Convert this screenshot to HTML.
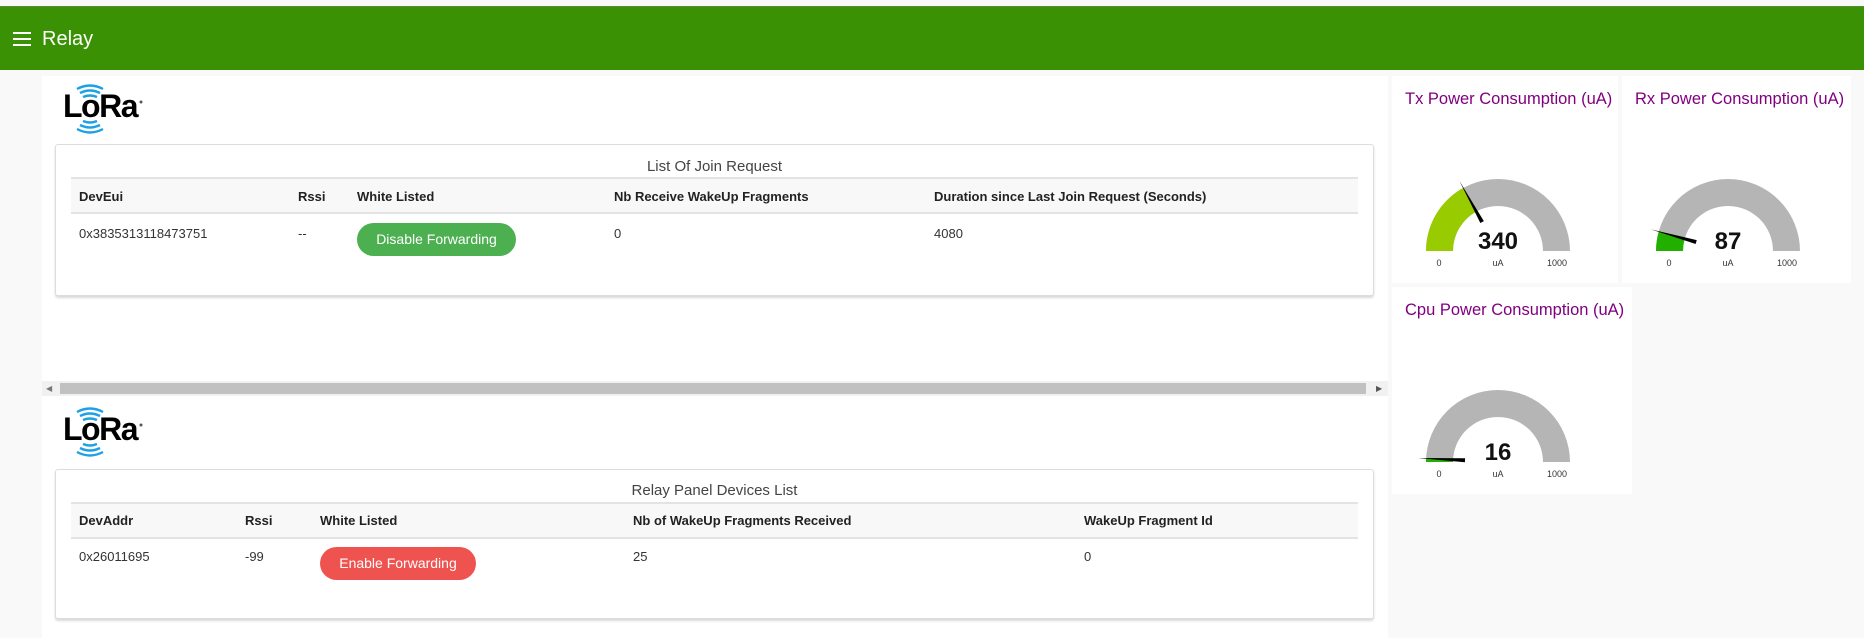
<!DOCTYPE html>
<html><head><meta charset="utf-8"><style>
*{margin:0;padding:0;box-sizing:border-box}
body{width:1864px;height:638px;background:#f9f9f9;font-family:"Liberation Sans",sans-serif;position:relative;overflow:hidden;color:#333}
.abs{position:absolute}
.hdr{left:0;top:6px;width:1864px;height:64px;background:#3a9103;border-top:1px solid #5a8a3a}
.ham{left:13px;top:32px;width:18px;height:2px;background:#fff;box-shadow:0 6px 0 #fff,0 12px 0 #fff}
.title{left:42px;top:28px;color:#fff;font-size:20px}
.panel{left:42px;top:76px;width:1346px;height:562px;background:#fff}
.card{background:#fff;border:1px solid #ddd;border-radius:3px;box-shadow:0 2px 2px rgba(0,0,0,.15)}
.ct{font-size:15px;color:#444;text-align:center;width:100%}
.th{background:#f8f8f8;border-top:2px solid #e3e3e3;border-bottom:2px solid #e3e3e3}
.b{font-weight:bold;font-size:13px;color:#222}
.t{font-size:13px;color:#333}
.btn{color:#fff;font-size:14px;text-align:center;border-radius:17px;line-height:33px;height:33px}
.sb{left:42px;top:381px;width:1346px;height:15px;background:#f1f1f1}
.g{background:#fff}
.gt{font-size:16.5px;color:#800080;white-space:nowrap}
</style></head><body>
<div class="abs hdr"></div>
<div class="abs ham"></div>
<div class="abs title">Relay</div>
<div class="abs panel"></div>

<svg class="abs" style="left:62px;top:84px" width="84" height="52" viewBox="0 0 84 52">
<text x="1" y="33" font-family="Liberation Sans" font-weight="bold" font-size="32" fill="#000" letter-spacing="-1.5">LoRa</text>
<g fill="none" stroke="#1ea0e6" stroke-width="2.4">
<path d="M15,5 Q28,-2 41,5"/><path d="M18,9 Q28,4 38,9"/><path d="M21,13 Q28,10 35,13"/>
<path d="M21,37 Q28,40 35,37"/><path d="M18,41 Q28,46 38,41"/><path d="M15,45 Q28,52 41,45"/>
</g><circle cx="79" cy="18" r="1.5" fill="#555"/></svg>

<div class="abs card" style="left:55px;top:144px;width:1319px;height:152px"></div>
<div class="abs ct" style="left:55px;top:158px;width:1319px">List Of Join Request</div>
<div class="abs th" style="left:71px;top:177px;width:1287px;height:37px"></div>
<div class="abs b" style="left:79px;top:189px">DevEui</div>
<div class="abs b" style="left:298px;top:189px">Rssi</div>
<div class="abs b" style="left:357px;top:189px">White Listed</div>
<div class="abs b" style="left:614px;top:189px">Nb Receive WakeUp Fragments</div>
<div class="abs b" style="left:934px;top:189px">Duration since Last Join Request (Seconds)</div>
<div class="abs t" style="left:79px;top:226px">0x3835313118473751</div>
<div class="abs t" style="left:298px;top:226px">--</div>
<div class="abs btn" style="left:357px;top:223px;width:159px;background:#4caf50">Disable Forwarding</div>
<div class="abs t" style="left:614px;top:226px">0</div>
<div class="abs t" style="left:934px;top:226px">4080</div>

<div class="abs sb"></div>
<div class="abs" style="left:60px;top:383px;width:1306px;height:11px;background:#c1c1c1"></div>
<div class="abs" style="left:46px;top:384px;font-size:8px;color:#777">&#9664;</div>
<div class="abs" style="left:1376px;top:384px;font-size:8px;color:#555">&#9654;</div>

<svg class="abs" style="left:62px;top:407px" width="84" height="52" viewBox="0 0 84 52">
<text x="1" y="33" font-family="Liberation Sans" font-weight="bold" font-size="32" fill="#000" letter-spacing="-1.5">LoRa</text>
<g fill="none" stroke="#1ea0e6" stroke-width="2.4">
<path d="M15,5 Q28,-2 41,5"/><path d="M18,9 Q28,4 38,9"/><path d="M21,13 Q28,10 35,13"/>
<path d="M21,37 Q28,40 35,37"/><path d="M18,41 Q28,46 38,41"/><path d="M15,45 Q28,52 41,45"/>
</g><circle cx="79" cy="18" r="1.5" fill="#555"/></svg>

<div class="abs card" style="left:55px;top:469px;width:1319px;height:150px"></div>
<div class="abs ct" style="left:55px;top:482px;width:1319px">Relay Panel Devices List</div>
<div class="abs th" style="left:71px;top:502px;width:1287px;height:37px"></div>
<div class="abs b" style="left:79px;top:513px">DevAddr</div>
<div class="abs b" style="left:245px;top:513px">Rssi</div>
<div class="abs b" style="left:320px;top:513px">White Listed</div>
<div class="abs b" style="left:633px;top:513px">Nb of WakeUp Fragments Received</div>
<div class="abs b" style="left:1084px;top:513px">WakeUp Fragment Id</div>
<div class="abs t" style="left:79px;top:549px">0x26011695</div>
<div class="abs t" style="left:245px;top:549px">-99</div>
<div class="abs btn" style="left:320px;top:547px;width:156px;background:#ef5350">Enable Forwarding</div>
<div class="abs t" style="left:633px;top:549px">25</div>
<div class="abs t" style="left:1084px;top:549px">0</div>

<div class="abs g" style="left:1392px;top:76px;width:226px;height:207px">
<div class="abs gt" style="left:13px;top:14px">Tx Power Consumption (uA)</div>
<svg class="abs" style="left:6px;top:75px" width="200" height="130">
<path d="M28,100 A72,72 0 0 1 172,100 L145,100 A45,45 0 0 0 55,100 Z" fill="#b5b5b5"/>
<path d="M28,100 A72,72 0 0 1 65.3,36.9 L78.3,60.6 A45,45 0 0 0 55,100 Z" fill="#99cc00"/>
<polygon points="61.4,29.9 85.85,70.14 82.35,72.06" fill="#000"/>
<text x="100" y="98" text-anchor="middle" font-family="Liberation Sans" font-weight="bold" font-size="24" fill="#111">340</text>
<g font-family="Liberation Sans" font-size="9" fill="#333" text-anchor="middle"><text x="41" y="115">0</text><text x="100" y="115">uA</text><text x="159" y="115">1000</text></g>
</svg></div>

<div class="abs g" style="left:1622px;top:76px;width:229px;height:207px">
<div class="abs gt" style="left:13px;top:14px">Rx Power Consumption (uA)</div>
<svg class="abs" style="left:6px;top:75px" width="200" height="130">
<path d="M28,100 A72,72 0 0 1 172,100 L145,100 A45,45 0 0 0 55,100 Z" fill="#b5b5b5"/>
<path d="M28,100 A72,72 0 0 1 30.7,80.6 L56.7,87.85 A45,45 0 0 0 55,100 Z" fill="#22b000"/>
<polygon points="23,78.4 68.74,89.17 67.66,93.03" fill="#000"/>
<text x="100" y="98" text-anchor="middle" font-family="Liberation Sans" font-weight="bold" font-size="24" fill="#111">87</text>
<g font-family="Liberation Sans" font-size="9" fill="#333" text-anchor="middle"><text x="41" y="115">0</text><text x="100" y="115">uA</text><text x="159" y="115">1000</text></g>
</svg></div>

<div class="abs g" style="left:1392px;top:287px;width:240px;height:207px">
<div class="abs gt" style="left:13px;top:14px">Cpu Power Consumption (uA)</div>
<svg class="abs" style="left:6px;top:75px" width="200" height="130">
<path d="M28,100 A72,72 0 0 1 172,100 L145,100 A45,45 0 0 0 55,100 Z" fill="#b5b5b5"/>
<path d="M28,100 A72,72 0 0 1 28.1,96.4 L55.06,97.74 A45,45 0 0 0 55,100 Z" fill="#22b000"/>
<polygon points="20.1,96 67.1,96.3 66.9,100.3" fill="#000"/>
<text x="100" y="98" text-anchor="middle" font-family="Liberation Sans" font-weight="bold" font-size="24" fill="#111">16</text>
<g font-family="Liberation Sans" font-size="9" fill="#333" text-anchor="middle"><text x="41" y="115">0</text><text x="100" y="115">uA</text><text x="159" y="115">1000</text></g>
</svg></div>
</body></html>
